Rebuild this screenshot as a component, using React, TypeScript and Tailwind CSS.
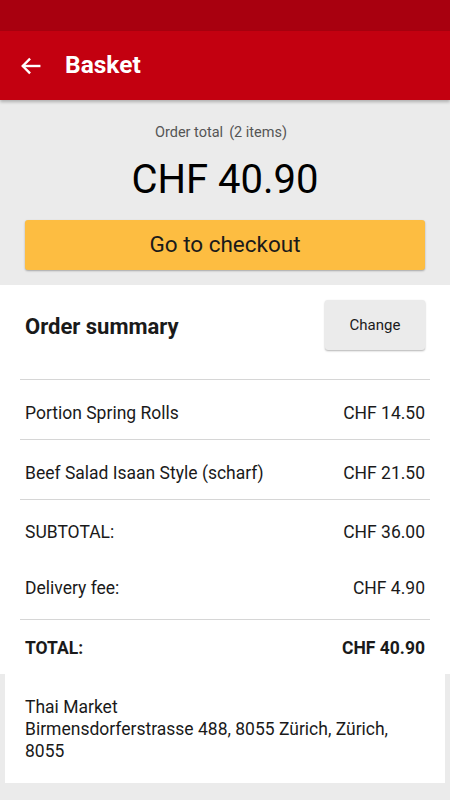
import React from 'react';

const rows = [
  { label: 'Portion Spring Rolls', price: 'CHF 14.50' },
  { label: 'Beef Salad Isaan Style (scharf)', price: 'CHF 21.50' },
];

const App: React.FC = () => {
  return (
    <div
      className="min-h-[800px] bg-[#ebebeb] text-[#1a1a1a]"
      style={{ fontFamily: 'Roboto, "Noto Sans", sans-serif' }}
    >
      <div className="h-[31px] bg-[#a8000f]" />
      <div className="h-[69px] bg-[#c30010] flex items-center px-[20px] shadow-[0_2px_3px_rgba(0,0,0,0.25)] relative">
        <svg width="22" height="22" viewBox="0 0 24 24" fill="none" stroke="white" strokeWidth="2.6" strokeLinecap="square">
          <path d="M21 12H4" />
          <path d="M11 4l-8 8 8 8" strokeLinecap="butt" />
        </svg>
        <span className="ml-[23px] text-white text-[24.5px] font-bold">Basket</span>
      </div>

      <div className="flex flex-col items-center pt-[23px] pb-[15px]">
        <div className="text-[14.5px] text-[#555] leading-[20px] mr-[8px]">
          Order total<span className="ml-[6px]">(2 items)</span>
        </div>
        <div className="text-[40px] leading-[48px] mt-[13px] text-black">CHF 40.90</div>
        <button className="mt-[16px] w-[400px] h-[50px] bg-[#fdbd41] rounded-[3px] text-[22.5px] text-[#1a1a1a] shadow-[0_1px_2px_rgba(0,0,0,0.3)]">
          Go to checkout
        </button>
      </div>

      <div className="bg-white">
        <div className="flex items-start justify-between pt-[15px] h-[95px] border-b border-[#d6d6d6] mx-[20px] px-[5px]">
          <div className="text-[22px] font-bold mt-[10px]">Order summary</div>
          <button className="w-[100px] h-[50px] bg-[#ebebeb] rounded-[3px] text-[15px] shadow-[0_1px_2px_rgba(0,0,0,0.3)]">
            Change
          </button>
        </div>
        {rows.map((r) => (
          <div
            key={r.label}
            className="mx-[20px] px-[5px] pt-[7px] h-[60px] flex items-center justify-between border-b border-[#d6d6d6] text-[17.5px]"
          >
            <span>{r.label}</span>
            <span>{r.price}</span>
          </div>
        ))}
        <div className="mx-[20px] px-[5px] border-b border-[#d6d6d6]">
          <div className="h-[60px] pt-[5px] flex items-center justify-between text-[17.5px]">
            <span>SUBTOTAL:</span>
            <span>CHF 36.00</span>
          </div>
          <div className="h-[59px] flex items-center justify-between text-[17.5px] pb-[2px]">
            <span>Delivery fee:</span>
            <span>CHF 4.90</span>
          </div>
        </div>
        <div className="mx-[20px] px-[5px] h-[54px] pt-[2px] flex items-center justify-between text-[17.5px] font-bold">
          <span>TOTAL:</span>
          <span>CHF 40.90</span>
        </div>
      </div>

      <div className="mx-[5px] bg-white px-[20px] pt-[22px] pb-[21px] text-[17.5px] leading-[22px]">
        <div>Thai Market</div>
        <div>Birmensdorferstrasse 488, 8055 Zürich, Zürich, 8055</div>
      </div>
    </div>
  );
};

export default App;
